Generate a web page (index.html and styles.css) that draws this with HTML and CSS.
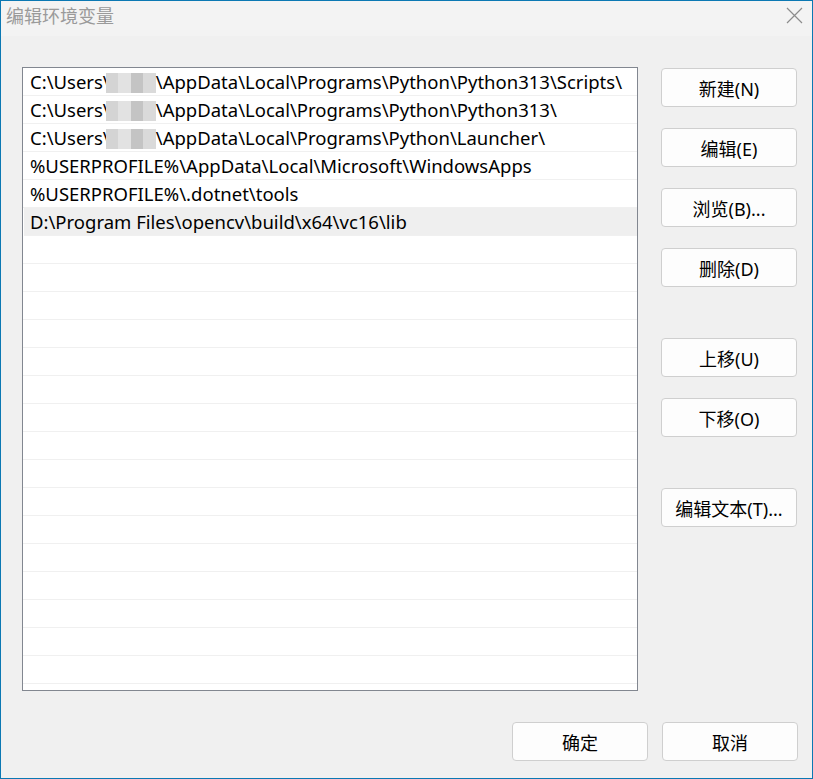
FILE: index.html
```html
<!DOCTYPE html>
<html lang="zh-CN">
<head>
  <meta charset="UTF-8">
  <title>编辑环境变量</title>
  <meta name="viewport" content="width=device-width, initial-scale=1.0">
  <link rel="stylesheet" href="styles.css">
</head>
<body>

  <div class="window">
    <div class="titlebar">
      <span class="title">编辑环境变量</span>
      <span class="close">
        <svg width="17" height="17" viewBox="0 0 17 17">
          <path d="M1 1 L16 16 M16 1 L1 16" stroke="#8c8c8c" stroke-width="1.2" fill="none"/>
        </svg>
      </span>
    </div>

    <div class="content">
      <div class="path-list">
        <div class="row">C:\Users\<span class="masked"><i></i><i></i><i></i><i></i></span>\AppData\Local\Programs\Python\Python313\Scripts\</div>
        <div class="row">C:\Users\<span class="masked"><i></i><i></i><i></i><i></i></span>\AppData\Local\Programs\Python\Python313\</div>
        <div class="row">C:\Users\<span class="masked"><i></i><i></i><i></i><i></i></span>\AppData\Local\Programs\Python\Launcher\</div>
        <div class="row">%USERPROFILE%\AppData\Local\Microsoft\WindowsApps</div>
        <div class="row">%USERPROFILE%\.dotnet\tools</div>
        <div class="row selected">D:\Program Files\opencv\build\x64\vc16\lib</div>
        <div class="row"></div>
        <div class="row"></div>
        <div class="row"></div>
        <div class="row"></div>
        <div class="row"></div>
        <div class="row"></div>
        <div class="row"></div>
        <div class="row"></div>
        <div class="row"></div>
        <div class="row"></div>
        <div class="row"></div>
        <div class="row"></div>
        <div class="row"></div>
        <div class="row"></div>
        <div class="row"></div>
        <div class="row"></div>
        <div class="row"></div>
      </div>

      <div class="side-buttons">
        <button class="btn">新建(N)</button>
        <button class="btn">编辑(E)</button>
        <button class="btn">浏览(B)...</button>
        <button class="btn">删除(D)</button>
        <button class="btn group-start">上移(U)</button>
        <button class="btn">下移(O)</button>
        <button class="btn group-start">编辑文本(T)...</button>
      </div>
    </div>

    <div class="footer">
      <button class="btn">确定</button>
      <button class="btn">取消</button>
    </div>
  </div>

</body>
</html>
```

FILE: styles.css
```css
:root {
  --accent: #0b78b3;
  --face: #f0f0f0;
  --list-border: #828790;
  --btn-border: #cfcfcf;
}

* {
  box-sizing: border-box;
}

body {
  margin: 0;
  padding: 0;
  font-family: "Segoe UI", "Noto Sans", "Noto Sans CJK SC", sans-serif;
  background-color: var(--face);
}

.window {
  width: 813px;
  height: 779px;
  border: 1px solid var(--accent);
  background-color: var(--face);
  display: flex;
  flex-direction: column;
}

.titlebar {
  height: 35px;
  background-color: #f3f3f3;
  display: flex;
  justify-content: space-between;
  align-items: flex-start;
  padding-left: 5px;
}

.title {
  font-family: "Noto Sans CJK SC", sans-serif;
  font-size: 18px;
  line-height: 28px;
  color: #9a9a9a;
}

.close {
  margin-top: 6px;
  margin-right: 9px;
  display: flex;
}

/* 列表 + 右侧按钮 */
.content {
  display: flex;
  padding: 31px 15px 0 21px;
  gap: 23px;
}

.path-list {
  width: 616px;
  height: 624px;
  border: 1px solid var(--list-border);
  background-color: #fff;
  overflow: hidden;
}

.row {
  height: 28px;
  line-height: 28px;
  padding-left: 7px;
  border-bottom: 1px solid #f0f0f0;
  font-family: "Noto Sans", "Noto Sans CJK SC", sans-serif;
  font-size: 18.5px;
  color: #000;
  white-space: nowrap;
}

.row.selected {
  background-color: #efefef;
  margin-left: 1px;
  padding-left: 6px;
}

/* 打码的用户名，盖住半个反斜杠 */
.masked {
  display: inline-flex;
  vertical-align: middle;
  width: 50px;
  height: 20px;
  margin-top: -3px;
  margin-left: -4px;
}

.masked i {
  flex: 1;
  background-color: #d4d4d4;
}

.masked i:nth-child(2) {
  background-color: #e2e2e2;
}

.masked i:nth-child(3) {
  background-color: #c4c4c4;
}

.masked i:nth-child(4) {
  background-color: #dadada;
}

.side-buttons {
  display: flex;
  flex-direction: column;
  gap: 21px;
  padding-top: 1px;
}

.side-buttons .group-start {
  margin-top: 30px;
}

.btn {
  width: 136px;
  height: 39px;
  background-color: #fdfdfd;
  border: 1px solid var(--btn-border);
  border-radius: 4px;
  font-family: "Noto Sans", "Noto Sans CJK SC", sans-serif;
  font-size: 18px;
  color: #000;
  padding: 0;
}

.footer {
  display: flex;
  justify-content: flex-end;
  gap: 14px;
  padding: 31px 14px 0 0;
}

.footer .btn {
  width: 136px;
}
```
